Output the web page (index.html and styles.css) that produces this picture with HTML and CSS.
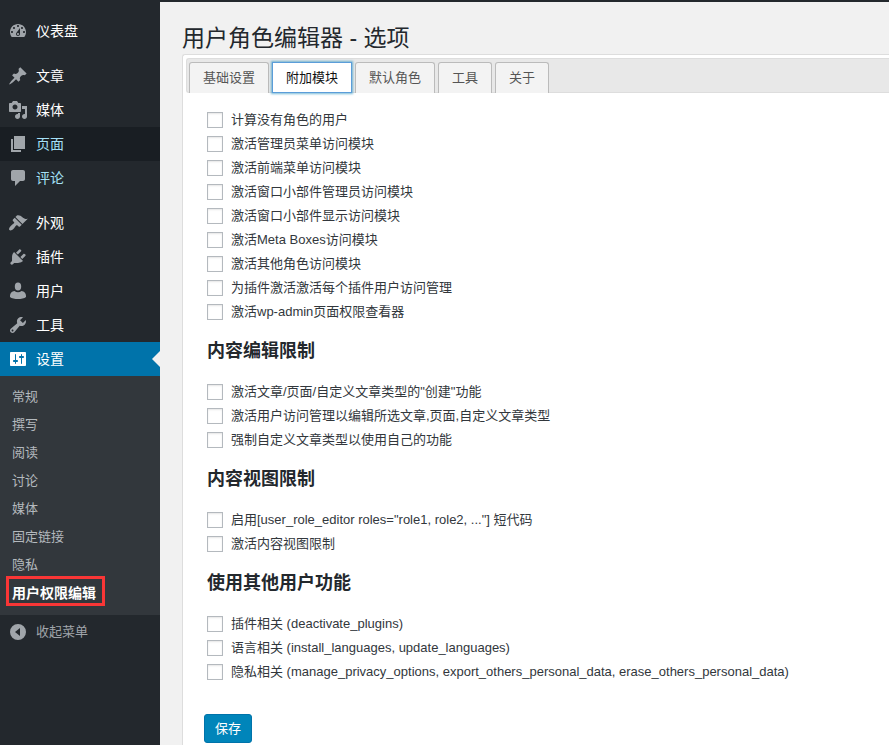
FILE: index.html
```html
<!DOCTYPE html>
<html lang="zh-CN">
<head>
  <meta charset="UTF-8" />
  <meta name="viewport" content="width=device-width, initial-scale=1.0"/>
  <title>用户角色编辑器 - 选项</title>
  <link rel="stylesheet" href="styles.css">
</head>
<body>

  <div class="admin-bar"></div>

  <div class="wrapper">
    <nav class="sidebar">
      <ul class="menu">
        <li><a href="#"><svg viewBox="0 0 20 20"><path d="M3.76 16h12.48c1.1-1.37 1.76-3.11 1.76-5 0-4.42-3.58-8-8-8s-8 3.58-8 8c0 1.89.66 3.63 1.76 5zM10 4c.55 0 1 .45 1 1s-.45 1-1 1-1-.45-1-1 .45-1 1-1zM6 6c.55 0 1 .45 1 1s-.45 1-1 1-1-.45-1-1 .45-1 1-1zm8 0c.55 0 1 .45 1 1s-.45 1-1 1-1-.45-1-1 .45-1 1-1zm-5.37 5.55L12 7v6c0 1.1-.9 2-2 2s-2-.9-2-2c0-.57.24-1.08.63-1.45zM4 10c.55 0 1 .45 1 1s-.45 1-1 1-1-.45-1-1 .45-1 1-1zm12 0c.55 0 1 .45 1 1s-.45 1-1 1-1-.45-1-1 .45-1 1-1zm-5 3c0-.55-.45-1-1-1s-1 .45-1 1 .45 1 1 1 1-.45 1-1z"/></svg>仪表盘</a></li>
        <li class="separator"></li>
        <li><a href="#"><svg viewBox="0 0 20 20"><path d="M10.44 3.02l1.82-1.82 6.36 6.35-1.83 1.82c-1.05-.68-2.48-.57-3.41.36l-.75.75c-.92.93-1.04 2.35-.35 3.41l-1.83 1.82-2.41-2.41-2.8 2.79c-.42.42-3.38 2.71-3.8 2.29s1.86-3.39 2.28-3.81l2.79-2.79L4.1 9.36l1.83-1.82c1.05.69 2.48.57 3.4-.36l.75-.75c.93-.92 1.05-2.35.36-3.41z"/></svg>文章</a></li>
        <li><a href="#"><svg viewBox="0 0 20 20"><path d="M13 11V4c0-.55-.45-1-1-1h-1.67L9 1H5L3.67 3H2c-.55 0-1 .45-1 1v7c0 .55.45 1 1 1h10c.55 0 1-.45 1-1zM7 4.5c1.38 0 2.5 1.12 2.5 2.5S8.38 9.5 7 9.5 4.5 8.38 4.5 7 5.62 4.5 7 4.5zM14 6h5v10.5c0 1.38-1.12 2.5-2.5 2.5S14 17.88 14 16.5s1.12-2.5 2.5-2.5c.17 0 .34.02.5.05V9h-3V6zm-4 8.05V13h2v3.5c0 1.38-1.12 2.5-2.5 2.5S7 17.88 7 16.5 8.12 14 9.5 14c.17 0 .34.02.5.05z"/></svg>媒体</a></li>
        <li class="hovered"><a href="#"><svg viewBox="0 0 20 20"><path d="M6 15V2h11v13H6zm-1 1h8v2H3V5h2v11z"/></svg>页面</a></li>
        <li class="lit"><a href="#"><svg viewBox="0 0 20 20"><path d="M5 2h10c1.1 0 2 .9 2 2v7c0 1.1-.9 2-2 2h-3l-5 5v-5H5c-1.1 0-2-.9-2-2V4c0-1.1.9-2 2-2z"/></svg>评论</a></li>
        <li class="separator"></li>
        <li><a href="#"><svg viewBox="0 0 20 20"><path d="M14.48 11.06L7.41 3.99l1.5-1.5c.5-.56 2.3-.47 3.51.32 1.21.8 1.43 1.28 2.91 2.1 1.18.64 2.45 1.26 4.45.85zm-.71.71L6.7 4.7 4.93 6.47c-.39.39-.39 1.02 0 1.41l1.06 1.06c.39.39.39 1.03 0 1.42-.6.6-1.43 1.11-2.21 1.69-.35.26-.7.53-1.01.84C1.43 14.23.4 16.08 1.4 17.07c.99 1 2.84-.03 4.18-1.36.31-.31.58-.66.85-1.02.57-.78 1.08-1.61 1.69-2.21.39-.39 1.02-.39 1.41 0l1.06 1.06c.39.39 1.02.39 1.41 0z"/></svg>外观</a></li>
        <li><a href="#"><svg viewBox="0 0 20 20"><path d="M13.11 4.36L9.87 7.6 8 5.73l3.24-3.24c.35-.34 1.05-.2 1.56.32.52.51.66 1.21.31 1.55zm-8 1.77l.91-1.12 9.01 9.01-1.19.84c-.71.71-2.63 1.16-3.82 1.16H6.14L4.9 17.26c-.59.59-1.54.59-2.12 0-.59-.58-.59-1.53 0-2.12l1.24-1.24v-3.88c0-1.13.4-3.19 1.09-3.89zm7.26 3.97l3.24-3.24c.34-.35 1.04-.21 1.55.31.52.51.66 1.21.31 1.55l-3.24 3.25z"/></svg>插件</a></li>
        <li><a href="#"><svg viewBox="0 0 20 20"><path d="M10 1.500a3.200 4 0 0 1 0 8 3.200 4 0 0 1 0-8zM6.500 10c1 .8 2.200 1.200 3.500 1.200s2.500-.4 3.500-1.200c2.700.3 4.500 2.400 4.500 4.800v1.200c-1.500 1.500-5 2-8 2s-6.500-.5-8-2v-1.200C2 12.400 3.800 10.300 6.500 10z"/></svg>用户</a></li>
        <li><a href="#"><svg viewBox="0 0 20 20"><path d="M16.68 9.77c-1.34 1.34-3.3 1.67-4.95.99l-5.41 6.52c-.99.99-2.59.99-3.58 0s-.99-2.59 0-3.57l6.52-5.42c-.68-1.65-.35-3.61.99-4.95 1.28-1.28 3.12-1.62 4.72-1.06l-2.89 2.89 2.82 2.82 2.86-2.87c.53 1.58.18 3.39-1.08 4.65zM3.81 16.21c.4.39 1.04.39 1.43 0 .4-.4.4-1.04 0-1.43-.39-.4-1.03-.4-1.43 0-.39.39-.39 1.03 0 1.43z"/></svg>工具</a></li>
        <li class="current">
          <a href="#"><svg viewBox="0 0 20 20"><path d="M18 16V4c0-.55-.45-1-1-1H3c-.55 0-1 .45-1 1v12c0 .55.45 1 1 1h14c.55 0 1-.45 1-1zM8 11h1c.55 0 1 .45 1 1s-.45 1-1 1H8v1.5c0 .28-.22.5-.5.5s-.5-.22-.5-.5V13H6c-.55 0-1-.45-1-1s.45-1 1-1h1V5.5c0-.28.22-.5.5-.5s.5.22.5.5V11zm5-2h-1c-.55 0-1-.45-1-1s.45-1 1-1h1V5.5c0-.28.22-.5.5-.5s.5.22.5.5V7h1c.55 0 1 .45 1 1s-.45 1-1 1h-1v5.5c0 .28-.22.5-.5.5s-.5-.22-.5-.5V9z"/></svg>设置</a>
        </li>
      </ul>

      <ul class="submenu">
        <li><a href="#">常规</a></li>
        <li><a href="#">撰写</a></li>
        <li><a href="#">阅读</a></li>
        <li><a href="#">讨论</a></li>
        <li><a href="#">媒体</a></li>
        <li><a href="#">固定链接</a></li>
        <li><a href="#">隐私</a></li>
        <li><a class="marked" href="#">用户权限编辑</a></li>
      </ul>

      <button class="collapse" type="button"><svg viewBox="0 0 20 20"><path fill-rule="evenodd" d="M10 2a8 8 0 1 0 0 16 8 8 0 0 0 0-16zM12 6v8l-5-4z"/></svg>收起菜单</button>
    </nav>

    <main class="content">
      <h1>用户角色编辑器 - 选项</h1>

      <div class="panel">
        <ul class="tabs">
          <li><a href="#">基础设置</a></li>
          <li><a class="active" href="#">附加模块</a></li>
          <li><a href="#">默认角色</a></li>
          <li><a href="#">工具</a></li>
          <li><a href="#">关于</a></li>
        </ul>

        <form class="options">
          <label><input type="checkbox">计算没有角色的用户</label>
          <label><input type="checkbox">激活管理员菜单访问模块</label>
          <label><input type="checkbox">激活前端菜单访问模块</label>
          <label><input type="checkbox">激活窗口小部件管理员访问模块</label>
          <label><input type="checkbox">激活窗口小部件显示访问模块</label>
          <label><input type="checkbox">激活Meta Boxes访问模块</label>
          <label><input type="checkbox">激活其他角色访问模块</label>
          <label><input type="checkbox">为插件激活激活每个插件用户访问管理</label>
          <label><input type="checkbox">激活wp-admin页面权限查看器</label>

          <h3>内容编辑限制</h3>
          <label><input type="checkbox">激活文章/页面/自定义文章类型的"创建"功能</label>
          <label><input type="checkbox">激活用户访问管理以编辑所选文章,页面,自定义文章类型</label>
          <label><input type="checkbox">强制自定义文章类型以使用自己的功能</label>

          <h3>内容视图限制</h3>
          <label><input type="checkbox">启用[user_role_editor roles="role1, role2, ..."] 短代码</label>
          <label><input type="checkbox">激活内容视图限制</label>

          <h3>使用其他用户功能</h3>
          <label><input type="checkbox">插件相关 (deactivate_plugins)</label>
          <label><input type="checkbox">语言相关 (install_languages, update_languages)</label>
          <label><input type="checkbox">隐私相关 (manage_privacy_options, export_others_personal_data, erase_others_personal_data)</label>

          <button class="save" type="submit">保存</button>
        </form>
      </div>
    </main>
  </div>

</body>
</html>
```
FILE: styles.css
```css
*,
*::after {
  box-sizing: border-box;
}

body {
  display: flex;
  flex-direction: column;
  min-height: 100vh;
  margin: 0;
  background-color: #f1f1f1;
  color: #32373c;
  font-family: "Liberation Sans", "Noto Sans CJK SC", sans-serif;
  font-size: 13px;
}

ul {
  list-style: none;
  margin: 0;
  padding: 0;
}

a {
  text-decoration: none;
}

button {
  font-family: inherit;
  cursor: pointer;
}

.admin-bar {
  height: 2px;
  background-color: #23282d;
}

.wrapper {
  display: flex;
  flex: 1;
}

/* Sidebar */
.sidebar {
  flex: 0 0 160px;
  padding-top: 12px;
  background-color: #23282d;
}

.sidebar svg {
  flex: none;
  width: 20px;
  height: 20px;
  margin-top: 7px;
  fill: #a0a5aa;
}

.menu a,
.collapse {
  display: flex;
  align-items: flex-start;
  gap: 8px;
  height: 34px;
  padding: 0 8px;
  color: #fff;
  font-size: 14px;
  line-height: 34px;
}

.menu .separator {
  height: 11px;
}

.menu .hovered {
  background-color: #191e23;
}

.menu .hovered a,
.menu .lit a {
  color: #a5e0f7;
}

.menu .current {
  position: relative;
  background-color: #0073aa;
}

.menu .current svg {
  fill: #fff;
}

.menu .current::after {
  content: "";
  position: absolute;
  top: 9px;
  right: 0;
  border: 8px solid transparent;
  border-left: none;
  border-right-color: #f1f1f1;
}

.submenu {
  padding: 7px 0 8px;
  background-color: #32373c;
}

.submenu a {
  display: block;
  padding: 0 12px;
  color: #b4b9be;
  line-height: 28px;
}

.submenu .marked {
  position: relative;
  color: #fff;
  font-size: 14px;
  font-weight: bold;
}

.submenu .marked::after {
  content: "";
  position: absolute;
  top: -3px;
  left: 6px;
  width: 99px;
  height: 30px;
  border: 3px solid #f93636;
}

.collapse {
  width: 100%;
  border: none;
  background: none;
  color: #a0a5aa;
  font-size: 13px;
}

/* Content */
.content {
  display: flex;
  flex: 1;
  flex-direction: column;
  min-width: 0;
  padding: 20px 0 0 22px;
}

h1 {
  margin: 0;
  color: #23282d;
  font-size: 23px;
  font-weight: 400;
  line-height: 32px;
}

.panel {
  flex: 1;
  padding: 3px 0 0 3px;
  border: 1px solid #ddd;
  border-width: 1px 0 0 1px;
  border-radius: 3px 0 0 0;
  background-color: #fff;
}

.tabs {
  display: flex;
  gap: 3px;
  height: 35px;
  padding: 3px 2px 0;
  border: 1px solid #ddd;
  border-right: none;
  border-radius: 3px 0 0 3px;
  background-color: #e8e8e8;
}

.tabs a {
  display: block;
  height: 31px;
  padding: 0 13px;
  border: 1px solid #bbb;
  border-bottom: none;
  border-radius: 3px 3px 0 0;
  background-color: #f3f3f3;
  color: #555;
  line-height: 30px;
}

.tabs .active {
  border: 1px solid #5b9dd9;
  border-radius: 0;
  background-color: #fff;
  box-shadow: 0 0 2px 1px rgba(30, 140, 190, 0.6);
  color: #111;
}

.options {
  padding: 15px 16px 2px 21px;
}

.options label {
  display: flex;
  align-items: flex-start;
  gap: 8px;
  min-height: 24px;
  line-height: 24px;
}

.options input {
  appearance: none;
  flex: none;
  width: 16px;
  height: 16px;
  margin: 4px 0 0;
  border: 1px solid #b4b9be;
  background-color: #fff;
  box-shadow: inset 0 1px 2px rgba(0, 0, 0, 0.1);
}

.options h3 {
  margin: 0;
  padding: 13px 0 15px;
  color: #23282d;
  font-size: 18px;
  line-height: 28px;
}

.save {
  display: block;
  height: 29px;
  margin: 30px 0 0 -3px;
  padding: 0 10px 2px;
  border: 1px solid #0073aa;
  border-radius: 3px;
  background-color: #0085ba;
  color: #fff;
  font-size: 13px;
}
```
